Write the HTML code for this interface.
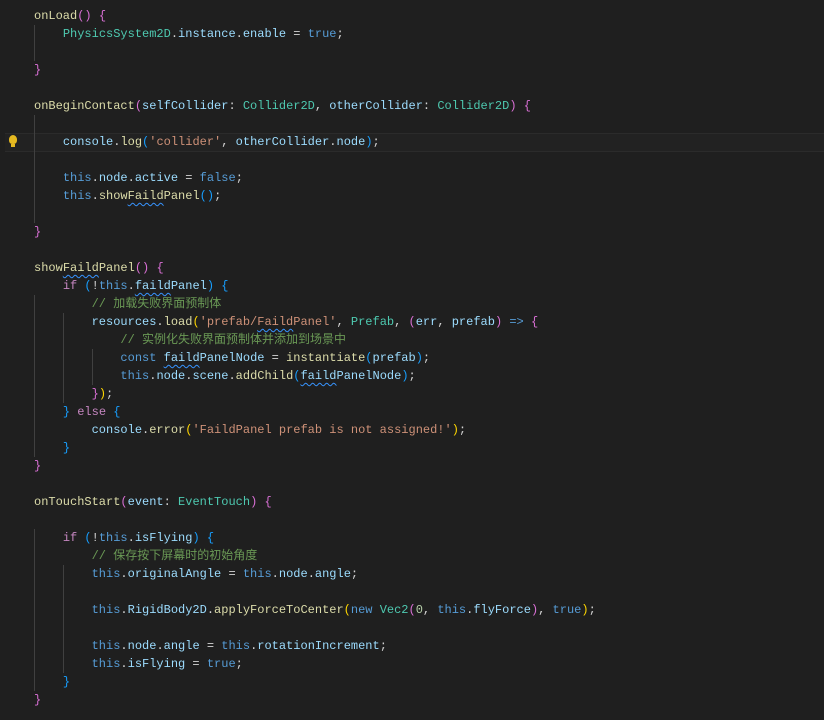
<!DOCTYPE html>
<html><head><meta charset="utf-8"><style>
html,body{margin:0;padding:0;background:#1f1f1f;width:824px;height:720px;overflow:hidden}
#c{position:absolute;left:0;top:7px;font-family:"Liberation Mono","Noto Sans CJK SC",monospace;font-size:12px;line-height:18px;color:#d4d4d4}
.l{height:18px;padding-left:34px;position:relative;white-space:pre}
.f{color:#dcdcaa}.k{color:#569cd6}.c{color:#c586c0}.v{color:#9cdcfe}.t{color:#4ec9b0}.s{color:#ce9178}.m{color:#6a9955}
.p1{color:#da70d6}.p2{color:#179fff}.p3{color:#ffd700}
.w{text-decoration:underline wavy #3794ff;text-decoration-thickness:1px;text-underline-offset:3px}
.g{position:absolute;width:1px;background:#404040}
.cur{position:absolute;left:5px;width:819px;top:133px;height:19px;background:#222222;border-top:1px solid #2b2b2b;border-bottom:1px solid #2b2b2b;box-sizing:border-box}
.bulb{position:absolute;left:9px;top:135px;width:8px;height:9px;border-radius:50% 50% 40% 40%;background:#e5b920}
.bulb:after{content:"";position:absolute;left:2px;top:9px;width:4px;height:3px;background:#e5b920}
</style></head><body>
<div class="cur"></div><div class="bulb"></div>
<div class="g" style="left:34px;top:25px;height:36px"></div>
<div class="g" style="left:34px;top:115px;height:108px"></div>
<div class="g" style="left:34px;top:295px;height:162px"></div>
<div class="g" style="left:63px;top:313px;height:90px"></div>
<div class="g" style="left:92px;top:349px;height:36px"></div>
<div class="g" style="left:34px;top:529px;height:162px"></div>
<div class="g" style="left:63px;top:565px;height:108px"></div>
<div id="c"><div class="l"><span class="f">onLoad</span><span class="p1">()</span> <span class="p1">{</span></div><div class="l">    <span class="t">PhysicsSystem2D</span>.<span class="v">instance</span>.<span class="v">enable</span> = <span class="k">true</span>;</div><div class="l"> </div><div class="l"><span class="p1">}</span></div><div class="l"> </div><div class="l"><span class="f">onBeginContact</span><span class="p1">(</span><span class="v">selfCollider</span>: <span class="t">Collider2D</span>, <span class="v">otherCollider</span>: <span class="t">Collider2D</span><span class="p1">)</span> <span class="p1">{</span></div><div class="l"> </div><div class="l">    <span class="v">console</span>.<span class="f">log</span><span class="p2">(</span><span class="s">'collider'</span>, <span class="v">otherCollider</span>.<span class="v">node</span><span class="p2">)</span>;</div><div class="l"> </div><div class="l">    <span class="k">this</span>.<span class="v">node</span>.<span class="v">active</span> = <span class="k">false</span>;</div><div class="l">    <span class="k">this</span>.<span class="f">show<span class="w">Faild</span>Panel</span><span class="p2">()</span>;</div><div class="l"> </div><div class="l"><span class="p1">}</span></div><div class="l"> </div><div class="l"><span class="f">show<span class="w">Faild</span>Panel</span><span class="p1">()</span> <span class="p1">{</span></div><div class="l">    <span class="c">if</span> <span class="p2">(</span>!<span class="k">this</span>.<span class="v"><span class="w">faild</span>Panel</span><span class="p2">)</span> <span class="p2">{</span></div><div class="l">        <span class="m">// 加载失败界面预制体</span></div><div class="l">        <span class="v">resources</span>.<span class="f">load</span><span class="p3">(</span><span class="s">'prefab/<span class="w">Faild</span>Panel'</span>, <span class="t">Prefab</span>, <span class="p1">(</span><span class="v">err</span>, <span class="v">prefab</span><span class="p1">)</span> <span class="k">=&gt;</span> <span class="p1">{</span></div><div class="l">            <span class="m">// 实例化失败界面预制体并添加到场景中</span></div><div class="l">            <span class="k">const</span> <span class="v"><span class="w">faild</span>PanelNode</span> = <span class="f">instantiate</span><span class="p2">(</span><span class="v">prefab</span><span class="p2">)</span>;</div><div class="l">            <span class="k">this</span>.<span class="v">node</span>.<span class="v">scene</span>.<span class="f">addChild</span><span class="p2">(</span><span class="v"><span class="w">faild</span>PanelNode</span><span class="p2">)</span>;</div><div class="l">        <span class="p1">}</span><span class="p3">)</span>;</div><div class="l">    <span class="p2">}</span> <span class="c">else</span> <span class="p2">{</span></div><div class="l">        <span class="v">console</span>.<span class="f">error</span><span class="p3">(</span><span class="s">'FaildPanel prefab is not assigned!'</span><span class="p3">)</span>;</div><div class="l">    <span class="p2">}</span></div><div class="l"><span class="p1">}</span></div><div class="l"> </div><div class="l"><span class="f">onTouchStart</span><span class="p1">(</span><span class="v">event</span>: <span class="t">EventTouch</span><span class="p1">)</span> <span class="p1">{</span></div><div class="l"> </div><div class="l">    <span class="c">if</span> <span class="p2">(</span>!<span class="k">this</span>.<span class="v">isFlying</span><span class="p2">)</span> <span class="p2">{</span></div><div class="l">        <span class="m">// 保存按下屏幕时的初始角度</span></div><div class="l">        <span class="k">this</span>.<span class="v">originalAngle</span> = <span class="k">this</span>.<span class="v">node</span>.<span class="v">angle</span>;</div><div class="l"> </div><div class="l">        <span class="k">this</span>.<span class="v">RigidBody2D</span>.<span class="f">applyForceToCenter</span><span class="p3">(</span><span class="k">new</span> <span class="t">Vec2</span><span class="p1">(</span><span style="color:#b5cea8">0</span>, <span class="k">this</span>.<span class="v">flyForce</span><span class="p1">)</span>, <span class="k">true</span><span class="p3">)</span>;</div><div class="l"> </div><div class="l">        <span class="k">this</span>.<span class="v">node</span>.<span class="v">angle</span> = <span class="k">this</span>.<span class="v">rotationIncrement</span>;</div><div class="l">        <span class="k">this</span>.<span class="v">isFlying</span> = <span class="k">true</span>;</div><div class="l">    <span class="p2">}</span></div><div class="l"><span class="p1">}</span></div></div>
</body></html>
